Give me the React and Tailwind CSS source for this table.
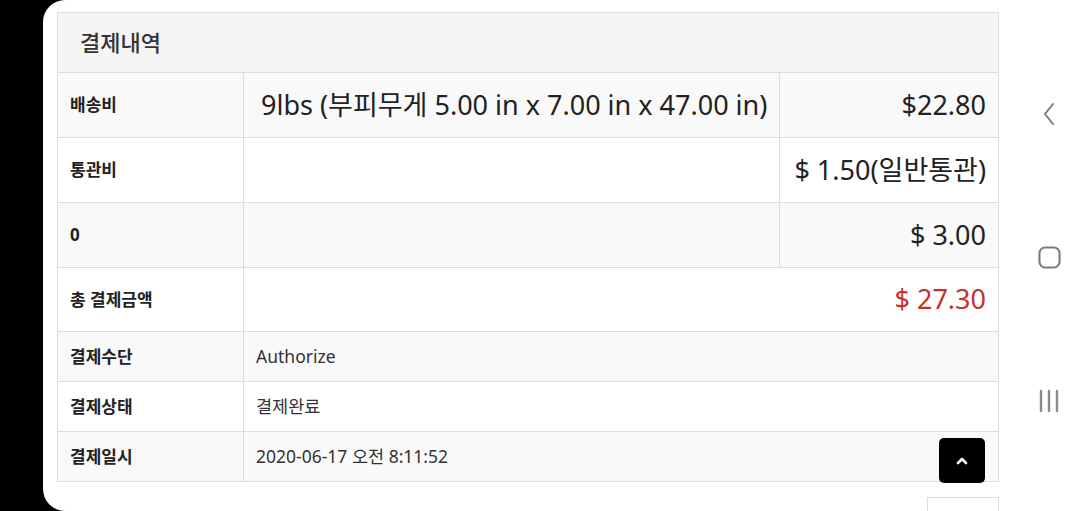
const rows = [
  { label: "배송비", middle: "9lbs (부피무게 5.00 in x 7.00 in x 47.00 in)", price: "$22.80", bg: "bg-[#f9f9f9]" },
  { label: "통관비", middle: "", price: "$ 1.50(일반통관)", bg: "bg-white" },
  { label: "0", middle: "", price: "$ 3.00", bg: "bg-[#f9f9f9]" },
];

const infoRows = [
  { label: "결제수단", value: "Authorize", bg: "bg-[#f9f9f9]" },
  { label: "결제상태", value: "결제완료", bg: "bg-white" },
  { label: "결제일시", value: "2020-06-17 오전 8:11:52", bg: "bg-[#f9f9f9]" },
];

function NavBar() {
  return (
    <div className="flex w-[62px] flex-col items-center pt-[102px]">
      <svg width="14" height="24" viewBox="0 0 14 24" fill="none">
        <path d="M11 2 L3 12 L11 22" stroke="#7a7a7a" strokeWidth="2" strokeLinecap="round" strokeLinejoin="round" />
      </svg>
      <svg className="mt-[120px]" width="23" height="23" viewBox="0 0 24 24" fill="none">
        <rect x="1.5" y="1.5" width="21" height="21" rx="6" stroke="#7a7a7a" strokeWidth="2.2" />
      </svg>
      <svg className="mt-[120px]" width="22" height="24" viewBox="0 0 22 24" fill="none">
        <path d="M3 2 V22 M11 2 V22 M19 2 V22" stroke="#8a8a8a" strokeWidth="2.4" strokeLinecap="round" />
      </svg>
    </div>
  );
}

export default function App() {
  return (
    <div
      className="flex h-[511px] w-[1080px] overflow-hidden bg-black"
      style={{ fontFamily: '"Noto Sans", "Noto Sans CJK KR", sans-serif' }}
    >
      <div className="relative ml-[43px] flex flex-1 rounded-l-[22px] bg-white">
        <div className="w-[975px] pl-[14px] pt-[12px]">
          <div className="w-[942px]">
            <div className="flex h-[60px] items-center border border-b-0 border-[#ddd] bg-[#f5f5f5] pl-[22px] text-[22px] font-medium text-[#333]">
              결제내역
            </div>
            <table className="w-full border-collapse text-[#222]">
              <tbody>
                {rows.map((r) => (
                  <tr key={r.label} className={r.bg}>
                    <td className="h-[65px] w-[186px] border border-[#ddd] pl-[12px] text-[17px] font-bold">{r.label}</td>
                    <td className="w-[536px] border border-[#ddd] pl-[17px] text-[27px] whitespace-nowrap">{r.middle}</td>
                    <td className="border border-[#ddd] pr-[12px] text-right text-[27px] whitespace-nowrap">{r.price}</td>
                  </tr>
                ))}
                <tr className="bg-white">
                  <td className="h-[64px] border border-[#ddd] pl-[12px] text-[17px] font-bold">총 결제금액</td>
                  <td colSpan={2} className="border border-[#ddd] pr-[12px] text-right text-[27px] text-[#c9302c]">
                    $ 27.30
                  </td>
                </tr>
                {infoRows.map((r) => (
                  <tr key={r.label} className={r.bg}>
                    <td className="h-[50px] border border-[#ddd] pl-[12px] text-[17px] font-bold">{r.label}</td>
                    <td colSpan={2} className="border border-[#ddd] pl-[12px] text-[17.5px] text-[#333]">
                      {r.value}
                    </td>
                  </tr>
                ))}
              </tbody>
            </table>
            <div className="ml-[870px] mt-[15px] h-[20px] w-[72px] border border-b-0 border-[#ddd] bg-white" />
          </div>
        </div>
        <NavBar />
        <button className="absolute left-[896px] top-[438px] flex h-[45px] w-[46px] items-center justify-center rounded-[5px] bg-black">
          <svg width="14" height="10" viewBox="0 0 14 10" fill="none">
            <path d="M3 7 L7 3 L11 7" stroke="white" strokeWidth="2.6" strokeLinecap="round" strokeLinejoin="round" />
          </svg>
        </button>
      </div>
    </div>
  );
}
